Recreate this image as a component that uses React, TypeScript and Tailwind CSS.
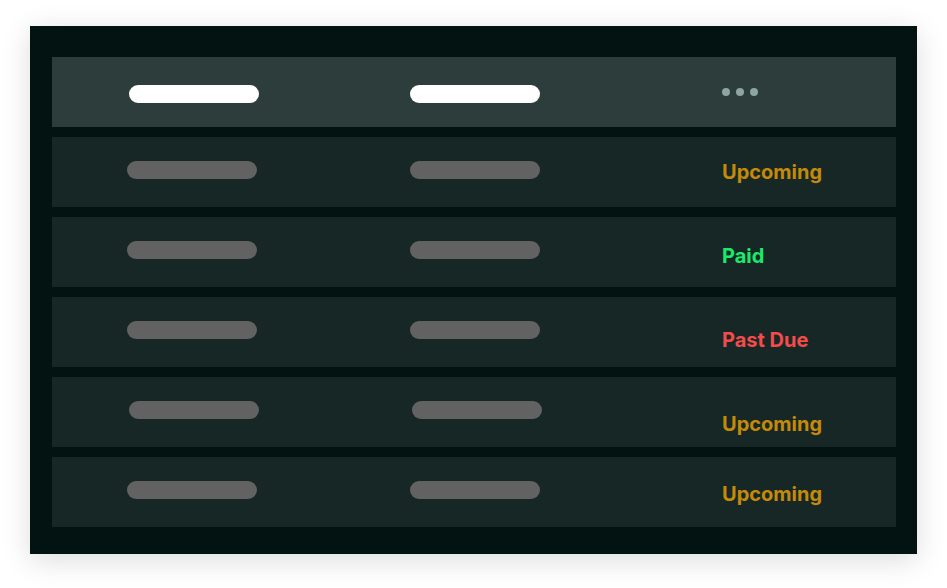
const ROWS = [
  { shift: false, label: "Upcoming", color: "text-[#c48a09]", textTop: "mt-[25px]" },
  { shift: false, label: "Paid", color: "text-[#19ea6b]", textTop: "mt-[29px]" },
  { shift: false, label: "Past Due", color: "text-[#f44b4b]", textTop: "mt-[33px]" },
  { shift: true, label: "Upcoming", color: "text-[#c48a09]", textTop: "mt-[37px]" },
  { shift: false, label: "Upcoming", color: "text-[#c48a09]", textTop: "mt-[27px]" },
];

function Pill({ className = "" }: { className?: string }) {
  return <div className={"h-[18px] w-[130px] shrink-0 rounded-full " + className} />;
}

export default function App() {
  return (
    <div className="min-h-screen bg-white pl-[30px] pt-[26px] font-['Inter',sans-serif]">
      <div className="flex h-[528px] w-[887px] flex-col gap-[10px] bg-[#021311] pb-[27px] pl-[22px] pr-[21px] pt-[31px] shadow-[0_6px_28px_rgba(0,0,0,0.14)]">
        {/* header */}
        <div className="flex h-[70px] shrink-0 items-start bg-[#2d3d3c]">
          <Pill className="ml-[77px] mt-[28px] bg-white" />
          <Pill className="ml-[151px] mt-[28px] bg-white" />
          <div className="ml-[182px] mt-[31px] flex gap-[6px]">
            <span className="h-[8px] w-[8px] rounded-full bg-[#8ea5a2]" />
            <span className="h-[8px] w-[8px] rounded-full bg-[#8ea5a2]" />
            <span className="h-[8px] w-[8px] rounded-full bg-[#8ea5a2]" />
          </div>
        </div>

        {ROWS.map((r, i) => (
          <div key={i} className="flex h-[70px] shrink-0 items-start bg-[#172726]">
            <Pill className={(r.shift ? "ml-[77px]" : "ml-[75px]") + " mt-[24px] bg-[#626262]"} />
            <Pill className="ml-[153px] mt-[24px] bg-[#626262]" />
            <span
              className={
                (r.shift ? "ml-[180px]" : "ml-[182px]") +
                " text-[20px] font-bold leading-none " +
                r.color +
                " " +
                r.textTop
              }
            >
              {r.label}
            </span>
          </div>
        ))}
      </div>
    </div>
  );
}
